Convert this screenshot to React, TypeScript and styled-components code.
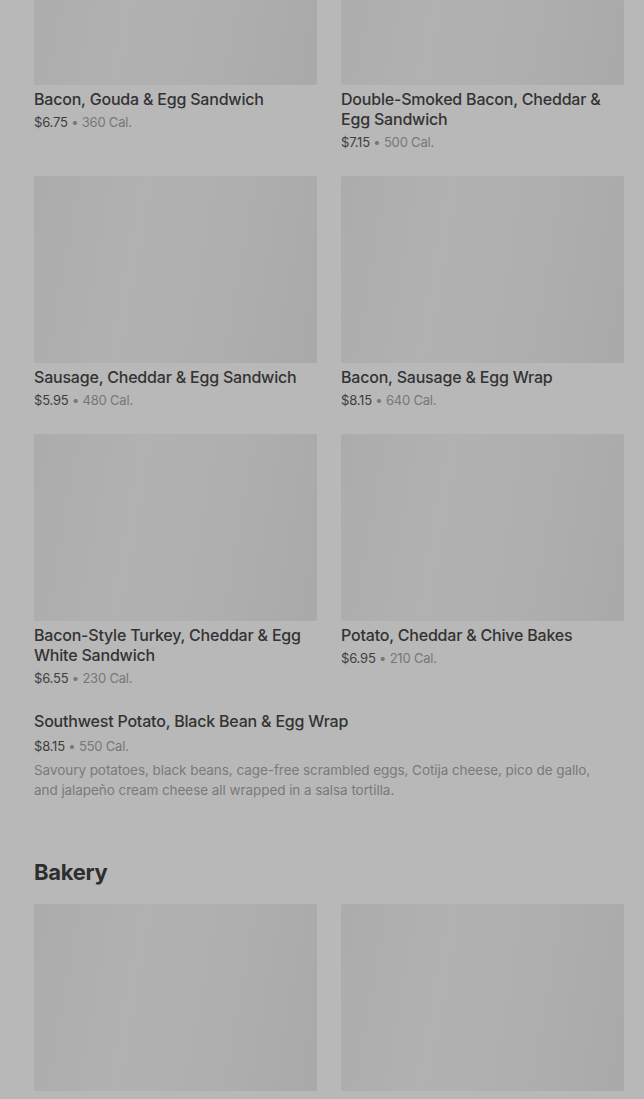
import React from "react";
import styled, { createGlobalStyle } from "styled-components";

const Global = createGlobalStyle`
  html, body { margin: 0; padding: 0; background: #b8b8b8; }
  body { font-family: Inter, "Noto Sans", sans-serif; overflow: hidden; }
`;

const Page = styled.div`
  padding: 0 20px 0 34px;
  margin-top: -102px;
`;

const Section = styled.section<{ $gap?: number }>`
  margin-top: ${(p) => p.$gap ?? 0}px;
`;

const Heading = styled.h2`
  margin: 0 0 18px;
  font-size: 22px;
  line-height: 28px;
  font-weight: 700;
  color: #2e2e2e;
  letter-spacing: -0.3px;
`;

const Grid = styled.div`
  display: grid;
  grid-template-columns: 1fr 1fr;
  column-gap: 24px;
  row-gap: 25px;
`;

const Card = styled.div`
  display: flex;
  flex-direction: column;
`;

const WideItem = styled.div`
  display: flex;
  flex-direction: column;
  margin-top: 20px;
`;

const Thumb = styled.div`
  height: 187px;
  border-radius: 2px;
  background: linear-gradient(100deg, #acacac 0%, #b1b1b1 35%, #afafaf 65%, #a9a9a9 100%);
`;

const Title = styled.div`
  margin-top: 4px;
  font-size: 16px;
  line-height: 20px;
  font-weight: 500;
  color: #333333;
  letter-spacing: -0.2px;
`;

const Meta = styled.div<{ $gap?: number }>`
  margin-top: ${(p) => p.$gap ?? 4}px;
  height: 18px;
  font-size: 13px;
  line-height: 18px;
  color: #777777;
  letter-spacing: -0.2px;
  white-space: nowrap;
`;

const Price = styled.span`
  color: #3e3e3e;
`;

const Desc = styled.p`
  margin: 5px 0 0;
  max-width: 580px;
  font-size: 13.5px;
  line-height: 20px;
  color: #7a7a7a;
  letter-spacing: -0.06px;
`;

type Item = { name: string; price: string; cal: string };

const breakfast: Item[] = [
  { name: "Bacon, Gouda & Egg Sandwich", price: "$6.75", cal: "360 Cal." },
  { name: "Double-Smoked Bacon, Cheddar & Egg Sandwich", price: "$7.15", cal: "500 Cal." },
  { name: "Sausage, Cheddar & Egg Sandwich", price: "$5.95", cal: "480 Cal." },
  { name: "Bacon, Sausage & Egg Wrap", price: "$8.15", cal: "640 Cal." },
  { name: "Bacon-Style Turkey, Cheddar & Egg White Sandwich", price: "$6.55", cal: "230 Cal." },
  { name: "Potato, Cheddar & Chive Bakes", price: "$6.95", cal: "210 Cal." },
];

const bakery: Item[] = [
  { name: "Butter Croissant", price: "$3.45", cal: "260 Cal." },
  { name: "Chocolate Croissant", price: "$3.95", cal: "300 Cal." },
];

const MenuCard = ({ item }: { item: Item }) => (
  <Card>
    <Thumb />
    <Title>{item.name}</Title>
    <Meta>
      <Price>{item.price}</Price> • {item.cal}
    </Meta>
  </Card>
);

export default function App() {
  return (
    <>
      <Global />
      <Page>
        <Section>
          <Grid>
            {breakfast.map((it) => (
              <MenuCard key={it.name} item={it} />
            ))}
          </Grid>
          <WideItem>
            <Title>Southwest Potato, Black Bean &amp; Egg Wrap</Title>
            <Meta $gap={6}>
              <Price>$8.15</Price> • 550 Cal.
            </Meta>
            <Desc>
              Savoury potatoes, black beans, cage-free scrambled eggs, Cotija cheese, pico de gallo,
              and jalapeño cream cheese all wrapped in a salsa tortilla.
            </Desc>
          </WideItem>
        </Section>
        <Section $gap={58}>
          <Heading>Bakery</Heading>
          <Grid>
            {bakery.map((it) => (
              <MenuCard key={it.name} item={it} />
            ))}
          </Grid>
        </Section>
      </Page>
    </>
  );
}
